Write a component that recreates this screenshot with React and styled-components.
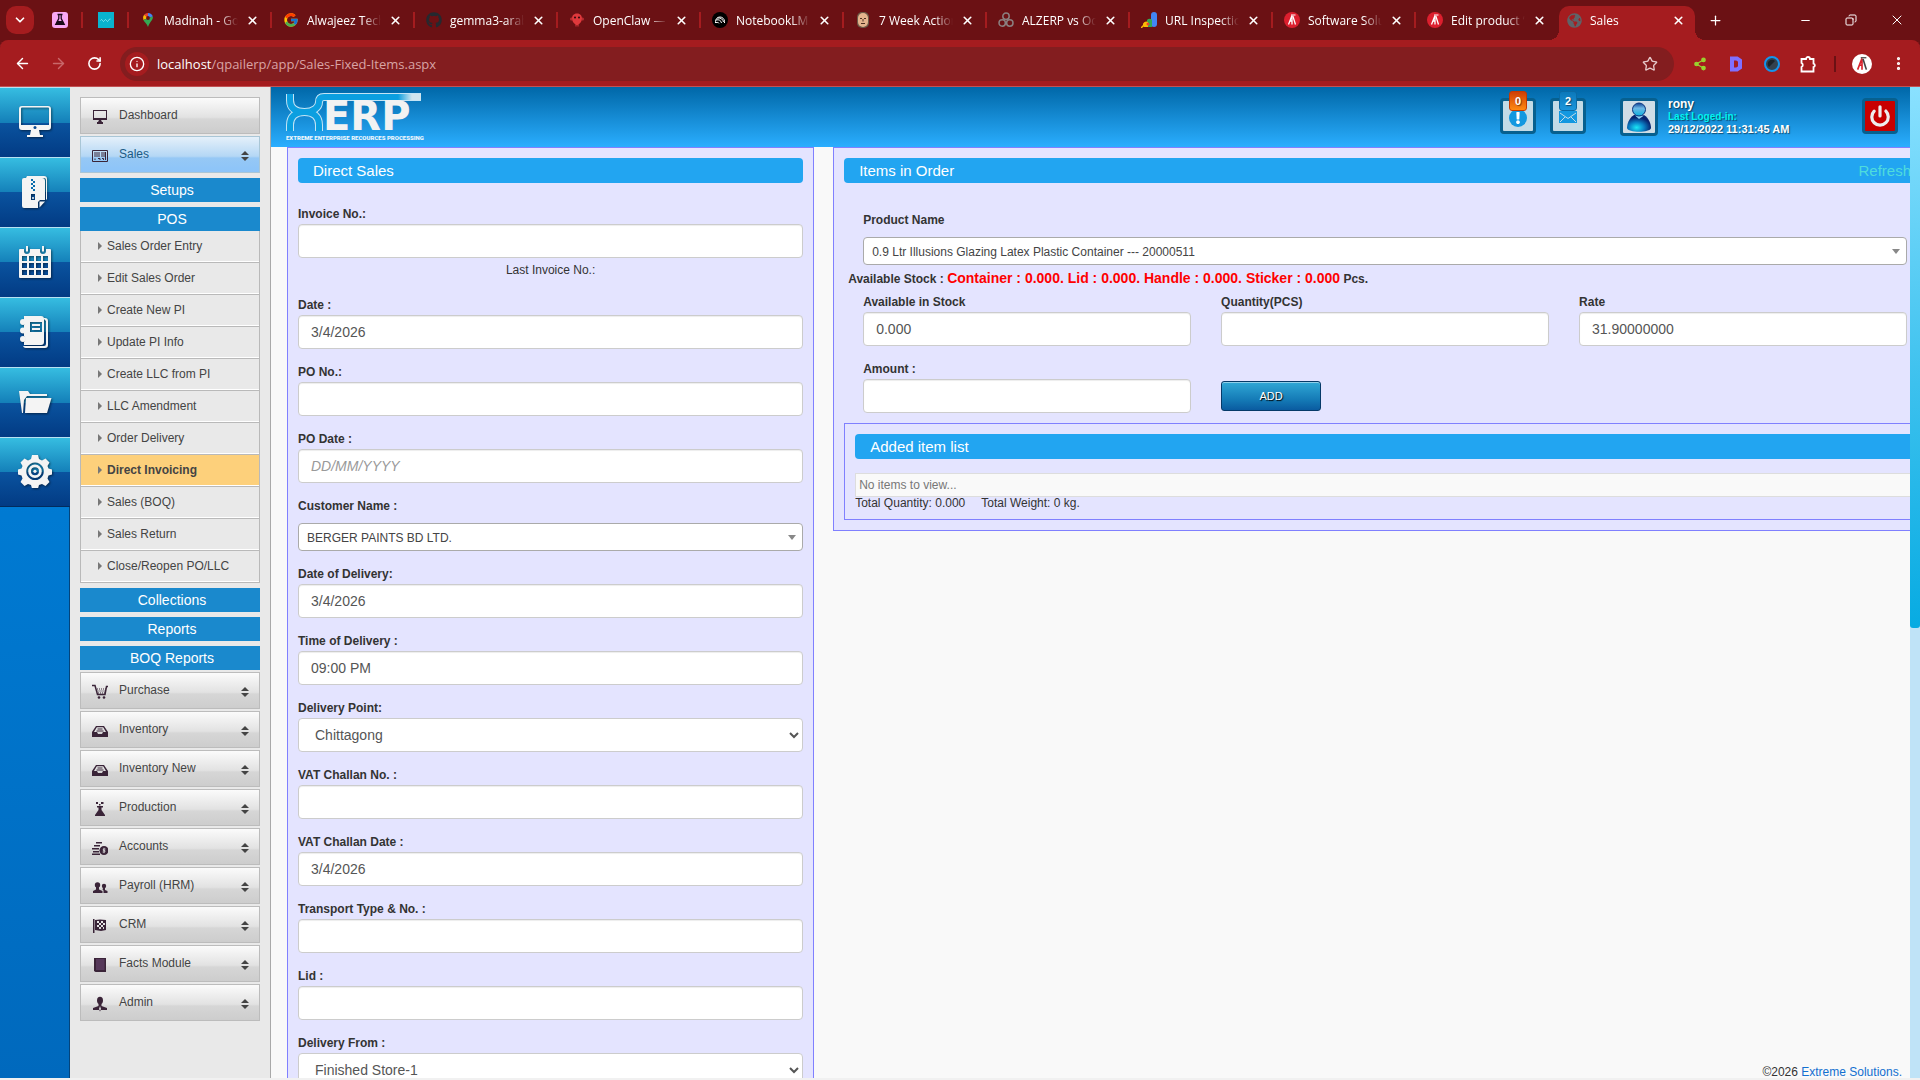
import { useId } from "react";
import styled, { createGlobalStyle, css } from "styled-components";
import {
    ArrowLeft,
    ArrowRight,
    ChevronDown,
    Copy,
    EllipsisVertical,
    Info,
    Minus,
    Plus,
    Power,
    RotateCw,
    Share2,
    Star,
    X,
} from "lucide-react";
import { FcGoogle } from "react-icons/fc";
import { FaExclamation, FaGithub, FaGlobeAmericas } from "react-icons/fa";

/* ---------- favicons ---------- */

const FlaskIcon = () => (
    <svg width="16" height="16" viewBox="0 0 16 16">
        <rect width="16" height="16" rx="3" fill="#f9a8f4" />
        <path d="M5.500 2.500h5M6.800 3v3.600L3.800 12.400h8.400L9.200 6.600V3" fill="none" stroke="#1b0c1a" strokeWidth="1.300" />
        <path d="M5.200 9h5.600l1.600 3.800H3.600z" fill="#1b0c1a" />
    </svg>
);

const TealIcon = () => (
    <svg width="16" height="16" viewBox="0 0 16 16">
        <rect width="16" height="16" fill="#09b3cf" />
        <path d="M2.500 8.500q1-2 2 0t2 0 2 0 2 0 2-1.500" fill="none" stroke="#8be4f0" />
    </svg>
);

const MapsIcon = () => (
    <svg width="16" height="16" viewBox="0 0 16 16">
        <path d="M8 1a5 5 0 0 0-3.900 1.800L8 6z" fill="#ea4335" />
        <path d="M8 1a5 5 0 0 1 4.800 3.600L8 6z" fill="#4285f4" />
        <path d="M4.100 2.800A5 5 0 0 0 3.400 8L8 6z" fill="#fbbc04" />
        <path d="M12.800 4.600C13.600 8 9.500 10 8 15 7 11.500 4.200 10 3.400 8L8 6z" fill="#34a853" />
        <circle cx="8" cy="6" r="1.900" fill="#6b1114" />
    </svg>
);

const ClawIcon = () => (
    <svg width="16" height="16" viewBox="0 0 16 16">
        <path d="M8 1.500c3.500 0 5 2.500 5 5 0 3-2 5-3.500 6v2h-1v-1.500h-1v1.500h-1v-2C5 11.500 3 9.500 3 6.500c0-2.500 1.500-5 5-5z" fill="#e0393c" />
        <path d="M3 5.500q-2-.5-2 1.500t2 1.500M13 5.500q2-.5 2 1.500t-2 1.500" fill="#b72c30" />
        <circle cx="6" cy="5.500" r="1" fill="#27090b" />
        <circle cx="10" cy="5.500" r="1" fill="#27090b" />
    </svg>
);

const NotebookIcon = () => (
    <svg width="16" height="16" viewBox="0 0 16 16">
        <circle cx="8" cy="8" r="8" fill="#000" />
        <path d="M3.500 11V9.500a4.500 4.500 0 0 1 9 0V11M4 8c3-.8 5 .5 5.500 3M4 10.500c1.500-.3 2.500 0 3 .8M5.500 6c3.500-.5 5.500 1.500 6 4" fill="none" stroke="#fff" />
    </svg>
);

const FaceIcon = () => (
    <svg width="16" height="16" viewBox="0 0 16 16">
        <rect x="2" y="0" width="12" height="16" rx="5" fill="#6d5a48" />
        <rect x="3" y="1" width="10" height="14" rx="5" fill="#e5b48d" />
        <path d="M5 6.500h2M9 6.500h2M6 11.500h4M8 7v2.500" stroke="#4c2f20" />
    </svg>
);

const RingsIcon = () => (
    <svg width="16" height="16" viewBox="0 0 16 16" fill="none" stroke="#8b8080" strokeWidth="1.500">
        <circle cx="8" cy="4.200" r="3.200" />
        <circle cx="4.200" cy="11" r="3.200" />
        <circle cx="11.800" cy="11" r="3.200" />
    </svg>
);

const ConsoleIcon = () => (
    <svg width="16" height="16" viewBox="0 0 16 16">
        <rect x="10" y="0" width="6" height="15" rx="3" fill="#4285f4" />
        <path d="M6 15V8a3 3 0 0 1 5 0v7z" fill="#34a853" />
        <path d="M2 14a3.500 3.500 0 0 1 5-4v5H3z" fill="#fbbc04" />
        <path d="M0 16l3-3" stroke="#fbbc04" strokeWidth="1.500" />
        <circle cx="7" cy="12" r="1.500" fill="#ea4335" />
    </svg>
);

const TowerIcon = ({ size = 16, disc = "#dc1f2e", ink = "#fff", shade = "#fff" }) => (
    <svg width={size} height={size} viewBox="0 0 16 16">
        <circle cx="8" cy="8" r="8" fill={disc} />
        <path d="M8 3.500L4.500 12.500M8 3.500v9M6 9h2" fill="none" stroke={ink} strokeWidth="1.300" />
        <path d="M8.800 4l2.700 8.500" stroke={shade} strokeWidth="1.300" />
        <path d="M7 3h4.500" stroke={shade} />
    </svg>
);

const tabs = [
    { title: "Madinah - Google Maps", icon: <MapsIcon /> },
    { title: "Alwajeez Technology", icon: <FcGoogle size={16} /> },
    { title: "gemma3-arabic", icon: <FaGithub size={16} color="#25292f" /> },
    { title: "OpenClaw — Personal", icon: <ClawIcon /> },
    { title: "NotebookLM", icon: <NotebookIcon /> },
    { title: "7 Week Action Plan", icon: <FaceIcon /> },
    { title: "ALZERP vs Odoo", icon: <RingsIcon /> },
    { title: "URL Inspection", icon: <ConsoleIcon /> },
    { title: "Software Solutions", icon: <TowerIcon /> },
    { title: "Edit product “ERP”", icon: <TowerIcon /> },
];

/* ---------- dock icons ---------- */

const dockIcons = {
    Desktop: (
        <>
            <path fillRule="evenodd" d="M4 1h26a3 3 0 0 1 3 3v18a3 3 0 0 1-3 3H4a3 3 0 0 1-3-3V4a3 3 0 0 1 3-3zm0 1.500a1 1 0 0 0-1 1V20h28V3.500a1 1 0 0 0-1-1z" />
            <circle cx="17" cy="22.500" r="1.500" fill="#0a4b93" />
            <path d="M13 25h8l1 5h3v2H9v-2h3z" />
        </>
    ),
    Archive: (
        <>
            <path d="M9 1h17a3 3 0 0 1 3 3v20l-1 1V5a2 2 0 0 0-2-2H8z" />
            <path fillRule="evenodd" d="M6 3h18a3 3 0 0 1 3 3v19h-5l-2 2v6H6a2 2 0 0 1-2-2V5a2 2 0 0 1 2-2zm7 16v6h4v-6z" />
            <path d="M21.500 32.500v-6H27z" />
            <path d="M13 4h2v2h-2zm2 2h2v2h-2zm-2 2h2v2h-2zm2 2h2v2h-2zm-2 2h2v2h-2zm2 2h2v2h-2z" fill="#0a6cab" />
            <circle cx="15" cy="23" r="1" />
        </>
    ),
    Calendar: (
        <path
            fillRule="evenodd"
            d="M2 4h4v2a3 3 0 0 0 6 0V4h10v2a3 3 0 0 0 6 0V4h4a1 1 0 0 1 1 1v27a1 1 0 0 1-1 1H2a1 1 0 0 1-1-1V5a1 1 0 0 1 1-1zM4 11v5h5v-5zm7 0v5h5v-5zm7 0v5h5v-5zm7 0v5h5v-5zM4 18v5h5v-5zm7 0v5h5v-5zm7 0v5h5v-5zm7 0v5h5v-5zM4 25v5h5v-5zm7 0v5h5v-5zm7 0v5h5v-5zm7 0v5h5v-5zM8 1h2v5.500H8zm16 0h2v5.500h-2z"
        />
    ),
    Notebook: (
        <>
            <path d="M25 3h2a3 3 0 0 1 3 3v24a3 3 0 0 1-3 3H8a3 3 0 0 1-3-2h21a2 2 0 0 0 2-2V6z" />
            <path fillRule="evenodd" d="M6 1h17a3 3 0 0 1 3 3v23a3 3 0 0 1-3 3H6v-3a4 4 0 0 0 0-6v-3a4 4 0 0 0 0-5v-3a4 4 0 0 0 0-5zm6 6v10h12V7z" />
            <path d="M14 9h8v2h-8zm0 4h8v2h-8z" />
            <circle cx="5" cy="7" r="3" />
            <circle cx="5" cy="15.500" r="3" />
            <circle cx="5" cy="24" r="3" />
        </>
    ),
    Folder: (
        <>
            <path d="M1 6h9l2 3h17v2H9L6 15l-1 13H4z" />
            <path d="M8 13h25.500L29 28H7z" />
        </>
    ),
    Settings: (
        <>
            <path
                fillRule="evenodd"
                d="M14 1h6l1 4 3 1.500 3.500-2 4 4-2 3.500 1 2.500 3.500 1v5l-3.500 1-1 3 2 3.500-4 4-3.500-2-3 1-1 3.500h-6l-1-3.500-3-1-3.500 2-4-4 2-3.500-1-3-3.500-1v-5l3.500-1 1-2.500-2-3.500 4-4 3.500 2L13 5zm3 7.500a8.800 8.800 0 1 0 .1 0z"
            />
            <circle cx="17" cy="17.300" r="5.400" fill="none" stroke="#f4f4f4" strokeWidth="2.800" />
            <circle cx="17" cy="17.300" r="1.600" />
        </>
    ),
};

/* ---------- menu icons, all on a 16px grid ---------- */

const menuIcons = {
    desktop: (
        <path fillRule="evenodd" d="M1 1h14v10H1zm1 1v7h12V2zM7 11h2l1 2h1v2H5v-2h1z" />
    ),
    barcode: (
        <>
            <path d="M.5 2.500h15v11H.5z" fill="none" stroke="#3a2438" />
            <path d="M3 4v5M5 4v5M7 4v5M10 4v5M12 4v5M13.500 4v8M3 10.500v1.500M6 10.500h2v1.500M10 10.500h1.500v1.500" fill="none" stroke="#3a2438" />
        </>
    ),
    cart: (
        <>
            <path d="M0 1.500h3l2.500 9h7.500l1.500-8H16" fill="none" stroke="#3a2438" strokeWidth="1.500" />
            <path d="M5 5h9M5.500 7h8M6 9h7" stroke="#3a2438" strokeDasharray="1 1" />
            <circle cx="7" cy="13.500" r="1.300" />
            <circle cx="12" cy="13.500" r="1.300" />
        </>
    ),
    tray: (
        <>
            <path fillRule="evenodd" d="M4 3h8l4 6v5H0V9zm.8 1.300L2 9h3l1 2h4l1-2h3l-2.800-4.700z" />
            <path d="M5.500 6h5M4.500 8h7" stroke="#3a2438" />
        </>
    ),
    flask: (
        <>
            <path d="M5 5h6v1.500H9.500V9l3.500 5v1H3v-1l3.500-5V6.500H5z" />
            <path d="M4 1h2v2H4zM7 3h1.500v1.500H7zM9 1h2.500v2H9z" />
        </>
    ),
    coins: (
        <>
            <path d="M4 2h6v1.500H4zM2 5h6v1.500H2zM0 8h7v1.500H0zM1 11h6v1.500H1zM0 13.500h8V15H0z" />
            <circle cx="12" cy="10.500" r="4.500" />
            <path d="M13.500 9h-2.200v1.500h1.600v1.500h-2.300M12 7.800v5.400" fill="none" stroke="#ddd" strokeWidth=".8" />
        </>
    ),
    people: (
        <>
            <circle cx="5.500" cy="6" r="2.700" />
            <path d="M4 8h3v2.500l3.500 1.500v2H1v-2l3-1.500z" />
            <circle cx="12" cy="7" r="2.200" />
            <path d="M11 9h2v2l2.500 1v2h-4v-2.500l-1-1z" />
        </>
    ),
    flag: (
        <>
            <path d="M1 1h1.500v14H1z" />
            <path fillRule="evenodd" d="M3 2l5-.5L14 2v10l-5 1-6-1zM5 3v2h2V3zm4 0v2h2V3zM7 5v2h2V5zm4 0v2h2V5zM5 7v2h2V7zm4 0v2h2V7zm-2 2v2h2V9zm4 0v2h1V9z" />
        </>
    ),
    book: (
        <>
            <path d="M2 1h12v14H3.500L2 14z" />
            <path d="M4 2h8.500v11H4z" fill="#56385a" />
        </>
    ),
    admin: (
        <>
            <ellipse cx="8" cy="4.500" rx="3" ry="3.700" />
            <path d="M6.500 7.500h3V10l5.500 2v2H9L8 15.500 7 14H1v-2l5.500-2z" />
            <path d="M8 10l1 3-1 2-1-2z" fill="#ddd" />
        </>
    ),
};

const posLinks = [
    "Sales Order Entry",
    "Edit Sales Order",
    "Create New PI",
    "Update PI Info",
    "Create LLC from PI",
    "LLC Amendment",
    "Order Delivery",
    "Direct Invoicing",
    "Sales (BOQ)",
    "Sales Return",
    "Close/Reopen PO/LLC",
];

const modules = [
    { label: "Purchase", icon: "cart" },
    { label: "Inventory", icon: "tray" },
    { label: "Inventory New", icon: "tray" },
    { label: "Production", icon: "flask" },
    { label: "Accounts", icon: "coins" },
    { label: "Payroll (HRM)", icon: "people" },
    { label: "CRM", icon: "flag" },
    { label: "Facts Module", icon: "book" },
    { label: "Admin", icon: "admin" },
];

/* ---------- pieces ---------- */

function MenuEntry({ label, icon, active, plain }) {
    return (
        <ModuleButton type="button" $active={active}>
            <svg width="16" height="16" viewBox="0 0 16 16" fill="#3a2438">{menuIcons[icon]}</svg>
            <span>{label}</span>
            {!plain && (
                <svg width="8" height="12" viewBox="0 0 8 12" fill="#444">
                    <path d="M4 1l4 4H0zM4 11l4-4H0z" />
                </svg>
            )}
        </ModuleButton>
    );
}

function Field({ label, value = "", placeholder }) {
    const id = useId();
    return (
        <Group>
            <Label htmlFor={id}>{label}</Label>
            <Input id={id} type="text" defaultValue={value} placeholder={placeholder} />
        </Group>
    );
}

function SelectField({ label, value }) {
    const id = useId();
    return (
        <Group>
            <Label htmlFor={id}>{label}</Label>
            <Select id={id}>
                <option>{value}</option>
            </Select>
        </Group>
    );
}

function ChosenField({ label, value, flush }) {
    const id = useId();
    return (
        <Group $flush={flush}>
            <Label htmlFor={id}>{label}</Label>
            <Chosen>
                <select id={id}>
                    <option>{value}</option>
                </select>
            </Chosen>
        </Group>
    );
}

function Logo() {
    const arms = "M4 2v6C4 16 9 20 18.500 20S33 15 33 10q0-5 5-5h97";
    const legs = "M4 39v-6C4 25 9 20 18.500 20S33 25 33 33v6";
    return (
        <svg width="144" height="50" viewBox="0 0 144 50">
            <defs>
                <linearGradient id="bar" gradientUnits="userSpaceOnUse" x1="112" x2="126" y1="0" y2="0">
                    <stop offset="0" stopColor="#0b9fe0" />
                    <stop offset="1" stopColor="#cfe5ef" />
                </linearGradient>
            </defs>
            <g fill="none" strokeWidth="8" stroke="#c3e4f5">
                <path d={arms} />
                <path d={legs} />
            </g>
            <g fill="none" strokeWidth="6">
                <path d={legs} stroke="#0b9fe0" />
                <path d={arms} stroke="url(#bar)" />
            </g>
            <text x="37" y="38" fontFamily="DejaVu Sans, sans-serif" fontWeight="700" fontSize="40" fill="#f2f2f2">ERP</text>
            <text x="0" y="48" fontFamily="Roboto, sans-serif" fontWeight="900" fontSize="6" fill="#eef7fc">
                EXTREME ENTERPRISE RECOURCES PROCESSING
            </text>
        </svg>
    );
}

function Browser() {
    return (
        <Frame>
            <TabStrip>
                <TabSearch type="button" aria-label="Search tabs">
                    <ChevronDown size={14} strokeWidth={3} />
                </TabSearch>
                <PinnedTab><FlaskIcon /></PinnedTab>
                <PinnedTab><TealIcon /></PinnedTab>
                {tabs.map(({ title, icon }, i) => (
                    <Tab key={title} $last={i === tabs.length - 1}>
                        {icon}
                        <TabTitle>{title}</TabTitle>
                        <X size={13} strokeWidth={3} />
                    </Tab>
                ))}
                <ActiveTab>
                    <FaGlobeAmericas size={15} color="#5f6368" />
                    <TabTitle>Sales</TabTitle>
                    <X size={13} strokeWidth={3} />
                </ActiveTab>
                <NewTab type="button" aria-label="New tab"><Plus size={15} /></NewTab>
                <WindowButtons>
                    <button type="button" aria-label="Minimize"><Minus size={13} /></button>
                    <button type="button" aria-label="Restore"><Restore size={12} /></button>
                    <button type="button" aria-label="Close"><X size={16} strokeWidth={1.5} /></button>
                </WindowButtons>
            </TabStrip>
            <Toolbar>
                <ToolButton type="button" aria-label="Back"><ArrowLeft size={17} /></ToolButton>
                <ToolButton type="button" aria-label="Forward" $dim><ArrowRight size={17} /></ToolButton>
                <ToolButton type="button" aria-label="Reload"><RotateCw size={15} strokeWidth={2.5} /></ToolButton>
                <AddressBar>
                    <SiteInfo><Info size={16} /></SiteInfo>
                    <Url>
                        <b>localhost</b>/qpailerp/app/Sales-Fixed-Items.aspx
                    </Url>
                    <Star size={16} />
                </AddressBar>
                <ToolButton type="button" aria-label="Share"><Share2 size={14} color="#9ad32f" fill="#9ad32f" /></ToolButton>
                <ToolButton type="button" aria-label="Extension D">
                    <svg width="14" height="16" viewBox="0 0 14 16" fill="none" stroke="#7f70ff" strokeWidth="4">
                        <path d="M3 2.500h5l3 2v7l-3 2H3z" />
                    </svg>
                </ToolButton>
                <ToolButton type="button" aria-label="Camera extension">
                    <svg width="16" height="16" viewBox="0 0 16 16">
                        <circle cx="8" cy="8" r="7" fill="#34414f" stroke="#1495ee" strokeWidth="2" />
                        <path d="M5 11a4 4 0 0 1 6-6z" fill="#1c232b" />
                    </svg>
                </ToolButton>
                <ToolButton type="button" aria-label="Extensions">
                    <svg width="17" height="18" viewBox="0 0 17 18" fill="none" stroke="#fff" strokeWidth="1.800">
                        <path d="M1.500 4h4.500a2 2 0 0 1 4 0h3.500v4.500a1.800 1.800 0 0 1 0 3.500v4.500h-12v-4.500a2.200 2.200 0 0 0 0-4z" />
                    </svg>
                </ToolButton>
                <ToolDivider />
                <ToolButton type="button" aria-label="Profile">
                    <TowerIcon size={20} disc="#fff" ink="#d7222c" shade="#444" />
                </ToolButton>
                <ToolButton type="button" aria-label="Menu"><EllipsisVertical size={17} strokeWidth={2.5} /></ToolButton>
            </Toolbar>
        </Frame>
    );
}

function DirectSales() {
    return (
        <Panel>
            <PanelTitle>Direct Sales</PanelTitle>
            <SalesForm>
                <Field label="Invoice No.:" />
                <LastInvoice>Last Invoice No.:</LastInvoice>
                <Field label="Date :" value="3/4/2026" />
                <Field label="PO No.:" />
                <Field label="PO Date :" placeholder="DD/MM/YYYY" />
                <ChosenField label="Customer Name :" value="BERGER PAINTS BD LTD." />
                <Field label="Date of Delivery:" value="3/4/2026" />
                <Field label="Time of Delivery :" value="09:00 PM" />
                <SelectField label="Delivery Point:" value="Chittagong" />
                <Field label="VAT Challan No. :" />
                <Field label="VAT Challan Date :" value="3/4/2026" />
                <Field label="Transport Type & No. :" />
                <Field label="Lid :" />
                <SelectField label="Delivery From :" value="Finished Store-1" />
            </SalesForm>
        </Panel>
    );
}

function ItemsInOrder() {
    return (
        <Panel>
            <PanelTitle>
                Items in Order
                <a href="#refresh">Refresh</a>
            </PanelTitle>
            <OrderForm>
                <ChosenField
                    label="Product Name"
                    value="0.9 Ltr Illusions Glazing Latex Plastic Container --- 20000511"
                    flush
                />
                <StockLine>
                    Available Stock :{" "}
                    <span>Container : 0.000. Lid : 0.000. Handle : 0.000. Sticker : 0.000</span> Pcs.
                </StockLine>
                <FieldGrid>
                    <Field label="Available in Stock" value="0.000" />
                    <Field label="Quantity(PCS)" />
                    <Field label="Rate" value="31.90000000" />
                    <Field label="Amount :" />
                    <AddButton type="button">ADD</AddButton>
                </FieldGrid>
            </OrderForm>
            <Panel $nested>
                <PanelTitle>Added item list</PanelTitle>
                <ItemTable>
                    <tbody>
                        <tr>
                            <td>No items to view...</td>
                        </tr>
                    </tbody>
                </ItemTable>
                <Totals>
                    <span>Total Quantity: 0.000</span>
                    <span>Total Weight: 0 kg.</span>
                </Totals>
            </Panel>
        </Panel>
    );
}

export default function App() {
    return (
        <Page>
            <GlobalStyle />
            <Browser />
            <Workspace>
                <Dock>
                    {Object.entries(dockIcons).map(([name, shape]) => (
                        <DockLink href={`#${name}`} key={name} aria-label={name}>
                            <svg width="34" height="34" viewBox="0 0 34 34" fill="#f4f4f4">{shape}</svg>
                        </DockLink>
                    ))}
                </Dock>
                <Sidebar>
                    <MenuEntry label="Dashboard" icon="desktop" plain />
                    <MenuEntry label="Sales" icon="barcode" active />
                    <SectionBar $lead>Setups</SectionBar>
                    <SectionBar>POS</SectionBar>
                    <LinkList>
                        {posLinks.map((text) => (
                            <li key={text}>
                                <MenuLink href="#pos" $active={text === "Direct Invoicing"}>{text}</MenuLink>
                            </li>
                        ))}
                    </LinkList>
                    <SectionBar $lead>Collections</SectionBar>
                    <SectionBar>Reports</SectionBar>
                    <SectionBar>BOQ Reports</SectionBar>
                    <ModuleList>
                        {modules.map((item) => (
                            <MenuEntry key={item.label} {...item} />
                        ))}
                    </ModuleList>
                </Sidebar>
                <Main>
                    <Header>
                        <Logo />
                        <HeaderTools>
                            <IconTile type="button" aria-label="Alerts">
                                <Round><FaExclamation size={12} /></Round>
                                <Badge $hot>0</Badge>
                            </IconTile>
                            <IconTile type="button" aria-label="Messages">
                                <svg width="18" height="18" viewBox="0 0 18 18">
                                    <path d="M0 2h18v12H0z" fill="#1398e0" />
                                    <path d="M1 4l8 5.500L17 4M1 13l5-5M17 13l-5-5" fill="none" stroke="#c3dbe6" />
                                </svg>
                                <Badge>2</Badge>
                            </IconTile>
                            <Avatar>
                                <svg width="32" height="32" viewBox="0 0 32 32">
                                    <defs>
                                        <radialGradient id="body" cx=".4" cy=".75" r=".6">
                                            <stop offset="0" stopColor="#1be7f5" />
                                            <stop offset=".5" stopColor="#0a84c8" />
                                            <stop offset="1" stopColor="#07236f" />
                                        </radialGradient>
                                        <linearGradient id="head" x2="0" y2="1">
                                            <stop offset="0" stopColor="#0b3f92" />
                                            <stop offset=".4" stopColor="#6db8e6" />
                                            <stop offset="1" stopColor="#0bb0dd" />
                                        </linearGradient>
                                    </defs>
                                    <path d="M11 14h10c5 3 7 9 7 13-1 5-23 5-24 0 0-4 2-10 7-13z" fill="url(#body)" />
                                    <path d="M12 14.500l4 3.500 5-3.500z" fill="#8fd3f2" />
                                    <circle cx="16" cy="8.500" r="6.500" fill="url(#head)" stroke="#0b3580" />
                                </svg>
                            </Avatar>
                            <UserText>
                                <strong>rony</strong>
                                <em>Last Loged-in:</em>
                                <time>29/12/2022 11:31:45 AM</time>
                            </UserText>
                            <IconTile type="button" aria-label="Log out" $danger>
                                <Power size={22} strokeWidth={3.5} />
                            </IconTile>
                        </HeaderTools>
                    </Header>
                    <Content>
                        <LeftColumn>
                            <DirectSales />
                        </LeftColumn>
                        <RightColumn>
                            <ItemsInOrder />
                            <Footer>
                                ©2026 <a href="#extreme">Extreme Solutions.</a>
                            </Footer>
                        </RightColumn>
                    </Content>
                </Main>
                <ScrollTrack>
                    <ScrollThumb />
                </ScrollTrack>
            </Workspace>
        </Page>
    );
}

/* ---------- styles ---------- */

const GlobalStyle = createGlobalStyle`
    *, *::before, *::after {
        box-sizing: border-box;
    }

    body {
        margin: 0;
        font-family: "Liberation Sans", Arial, sans-serif;
        font-size: 12px;
        color: #333;
    }

    button, input, select {
        font-family: inherit;
    }

    svg {
        flex: none;
    }
`;

const Page = styled.div`
    display: flex;
    flex-direction: column;
    height: 100vh;
    overflow: hidden;
    background: #f9f9f9;
    border-bottom: 2px solid #f1f1f1;
`;

const Frame = styled.div`
    flex: none;
    background: #6b1114;
    color: #fff;
    font-family: "Open Sans", sans-serif;
`;

const TabStrip = styled.div`
    display: flex;
    align-items: center;
    height: 40px;
    padding-left: 6px;
`;

const TabSearch = styled.button`
    display: flex;
    align-items: center;
    justify-content: center;
    width: 28px;
    height: 28px;
    margin-right: 3px;
    padding: 0;
    border: 0;
    border-radius: 10px;
    background: #a51c1f;
    color: #fff;
`;

const separator = css`
    background: linear-gradient(#a51c1f, #a51c1f) right center / 2px 16px no-repeat;
`;

const PinnedTab = styled.div`
    display: flex;
    justify-content: center;
    flex: none;
    width: 46px;
    ${separator}
`;

const Tab = styled.div`
    display: flex;
    align-items: center;
    gap: 8px;
    flex: 0 1 143px;
    min-width: 0;
    height: 28px;
    padding: 0 13px 0 11px;
    ${({ $last }) => !$last && separator}
`;

const TabTitle = styled.span`
    flex: 1;
    min-width: 0;
    overflow: hidden;
    white-space: nowrap;
    mask-image: linear-gradient(to right, #000 75%, transparent);
`;

const ActiveTab = styled.div`
    position: relative;
    display: flex;
    align-items: center;
    align-self: flex-end;
    gap: 8px;
    flex: 0 1 136px;
    height: 34px;
    padding: 0 10px 6px 8px;
    border-radius: 10px 10px 0 0;
    background: #a51c1f;

    &::before,
    &::after {
        content: "";
        position: absolute;
        bottom: 0;
        width: 10px;
        height: 10px;
    }

    &::before {
        right: 100%;
        background: radial-gradient(circle at 0 0, transparent 10px, #a51c1f 10px);
    }

    &::after {
        left: 100%;
        background: radial-gradient(circle at 100% 0, transparent 10px, #a51c1f 10px);
    }
`;

const NewTab = styled.button`
    display: flex;
    justify-content: center;
    width: 40px;
    padding: 0;
    border: 0;
    background: none;
    color: #fff;
`;

const WindowButtons = styled.div`
    display: flex;
    margin-left: auto;

    button {
        display: flex;
        align-items: center;
        justify-content: center;
        width: 46px;
        height: 28px;
        padding: 0;
        border: 0;
        background: none;
        color: #fff;
    }
`;

const Restore = styled(Copy)`
    transform: rotate(90deg);
`;

const Toolbar = styled.div`
    display: flex;
    align-items: center;
    height: 47px;
    padding: 0 4px;
    border-radius: 8px 8px 0 0;
    background: #a51c1f;
    box-shadow: inset 0 -1px #c25254;
`;

const ToolButton = styled.button`
    display: flex;
    align-items: center;
    justify-content: center;
    flex: none;
    width: 36px;
    height: 34px;
    padding: 0;
    border: 0;
    background: none;
    color: ${({ $dim }) => ($dim ? "#c9686a" : "#fff")};
`;

const AddressBar = styled.div`
    display: flex;
    align-items: center;
    flex: 1;
    gap: 8px;
    height: 34px;
    margin: 0 8px;
    padding: 0 16px 0 5px;
    border-radius: 17px;
    background: #831d1f;
    color: #e6c9ca;
`;

const SiteInfo = styled.span`
    display: flex;
    align-items: center;
    justify-content: center;
    width: 24px;
    height: 24px;
    border-radius: 50%;
    background: #a51c1f;
    color: #fff;
`;

const Url = styled.span`
    flex: 1;
    font-size: 13px;
    color: #d9a3a4;

    b {
        font-weight: 400;
        color: #fff;
    }
`;

const ToolDivider = styled.span`
    width: 2px;
    height: 16px;
    margin: 0 8px;
    background: #6b1114;
`;

const Workspace = styled.div`
    display: flex;
    flex: 1;
    min-height: 0;
`;

const Dock = styled.nav`
    flex: none;
    width: 70px;
    background: linear-gradient(#0087e2, #0069bd);
    box-shadow: inset -1px 0 #03447c;
`;

const DockLink = styled.a`
    display: flex;
    align-items: center;
    justify-content: center;
    height: 70px;
    padding-bottom: 2px;
    border-top: 1px solid #b6e2f2;
    background: linear-gradient(#36bde1, #1480b9 50%, #0a539f 50%, #023b84);

    &:last-child {
        border-bottom: 1px solid #022c5e;
    }

    svg {
        filter: drop-shadow(1px 1px 1px rgba(0, 0, 0, 0.5));
    }
`;

const Sidebar = styled.nav`
    flex: none;
    width: 201px;
    padding: 10px;
    background: #e9e9e9;
    border-right: 1px solid #a9a9a9;
`;

const ModuleButton = styled.button`
    display: flex;
    align-items: center;
    width: 100%;
    height: 37px;
    margin-bottom: 2px;
    padding: 0 10px 0 11px;
    border: 1px solid ${({ $active }) => ($active ? "#a9c6d6" : "#bcbcbc")};
    background: ${({ $active }) =>
        $active
            ? "linear-gradient(#e4f0fa, #b4d7f5 55%, #96c8f5 60%, #8cc4f9)"
            : "linear-gradient(#fbfbfb, #e2e2e2 55%, #d6d6d6 60%, #cdcdcd)"};
    color: ${({ $active }) => ($active ? "#1b5a85" : "#444")};
    font-size: 12px;
    text-align: left;

    span {
        flex: 1;
        margin-left: 11px;
        padding-bottom: 2px;
    }

    svg {
        margin-top: 3px;
    }
`;

const ModuleList = styled.div`
    padding-top: 2px;
`;

const SectionBar = styled.h2`
    height: 24px;
    margin: ${({ $lead }) => ($lead ? "5px" : "0")} 0 0;
    padding-left: 4px;
    background: #1a89cd;
    color: #fff;
    font-size: 14px;
    font-weight: 400;
    line-height: 24px;
    text-align: center;

    & + & {
        margin-top: 5px;
    }
`;

const LinkList = styled.ul`
    margin: 0;
    padding: 0;
    border: solid #b9b9b9;
    border-width: 0 1px;
    list-style: none;
`;

const MenuLink = styled.a`
    display: flex;
    align-items: center;
    gap: 5px;
    height: 32px;
    padding: 0 0 2px 17px;
    border-bottom: 1px solid #b9b9b9;
    box-shadow: inset 0 -1px #fff;
    background: ${({ $active }) => ($active ? "#fdd07b" : "none")};
    color: #444;
    font-weight: ${({ $active }) => ($active ? 700 : 400)};
    text-decoration: none;

    &::before {
        content: "";
        border: solid transparent;
        border-width: 4px 0 4px 4px;
        border-left-color: #777;
    }
`;

const Main = styled.div`
    display: flex;
    flex-direction: column;
    flex: 1;
    min-width: 0;
`;

const Header = styled.header`
    display: flex;
    flex: none;
    justify-content: space-between;
    height: 60px;
    padding: 5px 12px 0 15px;
    background: linear-gradient(#0067a7, #2aaeff);
`;

const HeaderTools = styled.div`
    display: flex;
    align-items: flex-start;
    padding-top: 6px;
`;

const IconTile = styled.button`
    position: relative;
    display: flex;
    align-items: flex-end;
    justify-content: center;
    width: 36px;
    height: 36px;
    margin-right: 14px;
    padding: 0 0 4px;
    border: 3px solid #07608f;
    border-radius: 4px;
    background: #c3dbe6;

    ${({ $danger }) => $danger && css`
        align-items: center;
        margin: 0;
        padding: 0;
        background: #c80000;
        color: #eee;
    `}
`;

const Round = styled.span`
    display: flex;
    align-items: center;
    justify-content: center;
    width: 18px;
    height: 18px;
    border-radius: 50%;
    background: #1398e0;
    color: #fff;
`;

const Badge = styled.span`
    position: absolute;
    top: -10px;
    left: 6px;
    width: 18px;
    height: 20px;
    border: 1px solid ${({ $hot }) => ($hot ? "#c63a00" : "#0a6aa5")};
    border-radius: 3px;
    background: ${({ $hot }) => ($hot ? "linear-gradient(#cf3f05, #ff8a12)" : "linear-gradient(#0b78ba, #1c96dc)")};
    color: #fff;
    font-size: 11px;
    font-weight: 700;
    line-height: 19px;
    text-align: center;
    text-shadow: 1px 1px 1px rgba(0, 0, 0, 0.5);
`;

const Avatar = styled.div`
    display: flex;
    height: 38px;
    margin: 0 10px 0 20px;
    border: 3px solid #07608f;
    border-radius: 4px;
    background: #cfdde6;
`;

const UserText = styled.div`
    display: flex;
    flex-direction: column;
    width: 194px;
    color: #fff;
    font-size: 11px;
    line-height: 12px;
    text-shadow: 1px 1px 1px rgba(0, 0, 0, 0.5);

    strong {
        font-size: 12px;
        line-height: 13px;
    }

    em {
        color: #00f5f0;
        font-size: 10px;
        font-style: normal;
        font-weight: 700;
    }

    time {
        font-weight: 700;
    }
`;

/* The columns run past the right edge, under the scrollbar. */
const Content = styled.main`
    display: grid;
    grid-template-columns: minmax(0, 32fr) minmax(0, 67fr);
    grid-template-rows: minmax(0, 1fr);
    gap: 19px;
    flex: 1;
    min-height: 0;
    margin-right: -27px;
    padding-left: 16px;
    overflow: hidden;
`;

const LeftColumn = styled.div`
    min-height: 0;
`;

const RightColumn = styled.div`
    display: flex;
    flex-direction: column;
    justify-content: space-between;
`;

const Panel = styled.section`
    margin-top: ${({ $nested }) => ($nested ? "10px" : "0")};
    padding: 10px;
    border: 1px solid #8080ff;
    background: #e4e4ff;
`;

const PanelTitle = styled.h3`
    display: flex;
    justify-content: space-between;
    height: 25px;
    margin: 0;
    padding: 0 15px;
    border-radius: 4px;
    background: #22a5f1;
    color: #fff;
    font-size: 15px;
    font-weight: 400;
    line-height: 25px;

    a {
        color: #4fdcdc;
        text-decoration: none;
    }
`;

const SalesForm = styled.form`
    padding-top: 23px;
`;

const OrderForm = styled.form`
    padding: 29px 19px 0;
`;

const Group = styled.div`
    margin-bottom: ${({ $flush }) => ($flush ? "0" : "15px")};
`;

const Label = styled.label`
    display: block;
    margin-bottom: 2px;
    font-weight: 700;
    line-height: 16px;
`;

const control = css`
    display: block;
    width: 100%;
    height: 34px;
    padding: 6px 12px;
    border: 1px solid #ccc;
    border-radius: 4px;
    background: #fff;
    color: #555;
    font-size: 14px;
`;

const Input = styled.input`
    ${control}
    box-shadow: inset 0 1px 1px rgba(0, 0, 0, 0.075);

    &::placeholder {
        color: #999;
        font-style: italic;
    }
`;

const Select = styled.select`
    ${control}
`;

const Chosen = styled.div`
    position: relative;
    padding-top: 7px;

    select {
        display: block;
        width: 100%;
        height: 28px;
        padding: 1px 8px 0;
        appearance: none;
        border: 1px solid #aaa;
        border-radius: 4px;
        background: #fff;
        color: #444;
        font-size: 12px;
    }

    &::after {
        content: "";
        position: absolute;
        top: 19px;
        right: 7px;
        border: solid transparent;
        border-width: 5px 4px 0;
        border-top-color: #888;
    }
`;

const LastInvoice = styled.p`
    margin: -12px 0 18px;
    line-height: 18px;
    text-align: center;
`;

const StockLine = styled.p`
    margin: 0 0 1px -15px;
    font-weight: 700;
    line-height: 28px;

    span {
        color: #f00;
        font-size: 14px;
        line-height: 20px;
    }
`;

const FieldGrid = styled.div`
    display: grid;
    grid-template-columns: repeat(3, minmax(0, 1fr));
    gap: 15px 30px;

    ${Group} {
        margin: 0;
    }
`;

const AddButton = styled.button`
    align-self: end;
    justify-self: start;
    width: 100px;
    height: 30px;
    margin-bottom: 2px;
    border: 1px solid #063a68;
    border-radius: 3px;
    background: linear-gradient(#30a8d6, #1479b5 65%, #0a5ba0);
    box-shadow: inset 0 1px #8fd0ea;
    color: #fff;
    font-size: 11px;
    text-shadow: 1px 1px 1px #000;
`;

const ItemTable = styled.table`
    width: 100%;
    height: 24px;
    margin-top: 14px;
    border: 1px solid #ddd;
    border-spacing: 0;
    background: #f9f9f9;

    td {
        padding: 0 3px;
        color: #777;
    }
`;

const Totals = styled.div`
    display: flex;
    gap: 16px;
    line-height: 12px;
`;

const Footer = styled.footer`
    padding-right: 35px;
    line-height: 12px;
    text-align: right;

    a {
        color: #1370d0;
        text-decoration: none;
    }
`;

const ScrollTrack = styled.div`
    z-index: 1;
    flex: none;
    width: 10px;
    background: #bfe3f7;
`;

const ScrollThumb = styled.div`
    height: calc(100% * 6 / 11);
    border-radius: 0 0 3px 3px;
    background: linear-gradient(#8ae1ff, #3cc1ee 55%, #07abe2);
`;
